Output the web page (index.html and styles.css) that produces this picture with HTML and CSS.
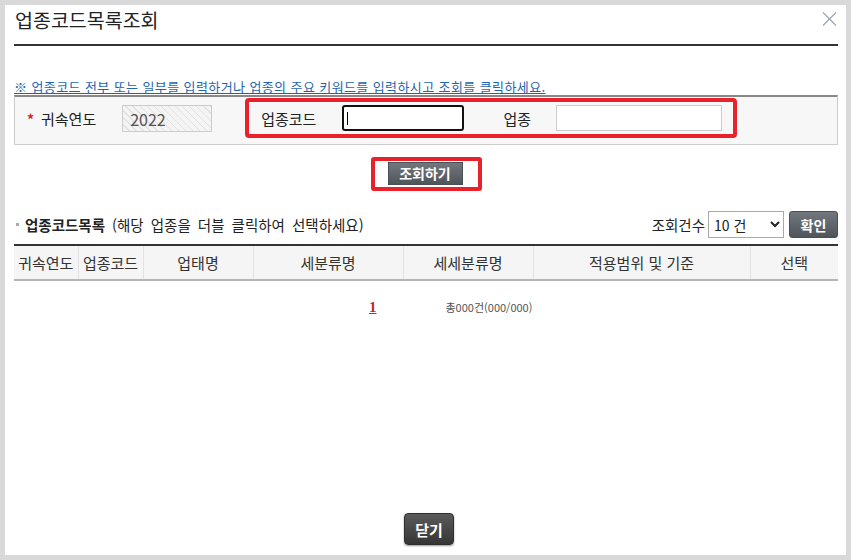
FILE: index.html
```html
<!DOCTYPE html>
<html lang="ko">
<head>
    <meta charset="UTF-8">
    <meta name="viewport" content="width=device-width, initial-scale=1.0">
    <title>업종코드목록조회</title>
    <link rel="stylesheet" href="styles.css">
</head>
<body>
    <div class="popup">
        <div class="popup-head">
            <h1>업종코드목록조회</h1>
            <button type="button" class="btn-x" aria-label="닫기">
                <svg width="15" height="14" viewBox="0 0 15 14">
                    <path d="M1 0.5 L14 13.5 M14 0.5 L1 13.5" stroke="#9aa6b6" stroke-width="1.2" fill="none"/>
                </svg>
            </button>
        </div>

        <p class="guide">※ 업종코드 전부 또는 일부를 입력하거나 업종의 주요 키워드를 입력하시고 조회를 클릭하세요.</p>

        <div class="search-box">
            <span class="req">*</span>
            <label class="lbl lbl-year">귀속연도</label>
            <input type="text" class="inp-year" value="2022" readonly>

            <div class="mark mark-field">
                <label class="lbl lbl-code">업종코드</label>
                <span class="caret-wrap"><input type="text" class="inp-code"></span>
                <label class="lbl lbl-name">업종</label>
                <input type="text" class="inp-name">
            </div>
        </div>

        <div class="search-btn-wrap">
            <div class="mark mark-btn">
                <button type="button" class="btn-dark btn-search">조회하기</button>
            </div>
        </div>

        <div class="list-head">
            <div class="list-title"><strong>업종코드목록</strong>&nbsp;(해당 업종을 더블 클릭하여 선택하세요)</div>
            <div class="list-opt">
                <span>조회건수</span>
                <select class="sel-count">
                    <option>10 건</option>
                    <option>20 건</option>
                    <option>50 건</option>
                </select>
                <button type="button" class="btn-dark btn-ok">확인</button>
            </div>
        </div>

        <table class="list-table">
            <colgroup>
                <col style="width:64px">
                <col style="width:65px">
                <col style="width:110px">
                <col style="width:150px">
                <col style="width:130px">
                <col style="width:217px">
                <col style="width:88px">
            </colgroup>
            <thead>
                <tr>
                    <th>귀속연도</th>
                    <th>업종코드</th>
                    <th>업태명</th>
                    <th>세분류명</th>
                    <th>세세분류명</th>
                    <th>적용범위 및 기준</th>
                    <th>선택</th>
                </tr>
            </thead>
        </table>

        <div class="paging">
            <a href="#" class="page-num">1</a>
            <span class="total">총000건(000/000)</span>
        </div>

        <div class="popup-foot">
            <button type="button" class="btn-close">닫기</button>
        </div>
    </div>
</body>
</html>
```

FILE: styles.css
```css
* {
    box-sizing: border-box;
}

body {
    margin: 0;
    padding: 5px;
    background: #d9d9d9;
    font-family: "Noto Sans CJK KR", "Noto Sans", sans-serif;
    color: #333;
}

.popup {
    width: 841px;
    height: 550px;
    background: #fff;
    padding: 0 8px 10px 9px;
    display: flex;
    flex-direction: column;
}

/* 상단 타이틀 */
.popup-head {
    height: 41px;
    border-bottom: 2px solid #333;
    display: flex;
    justify-content: space-between;
    align-items: flex-start;
}

.popup-head h1 {
    margin: 0;
    padding-left: 1px;
    font-size: 19.5px;
    font-weight: normal;
    line-height: 30px;
    color: #222;
}

.btn-x {
    margin: 7px 1px 0 0;
    padding: 0;
    border: none;
    background: none;
    width: 15px;
    height: 14px;
    line-height: 0;
}

.guide {
    margin: 33px 0 0;
    font-size: 13px;
    letter-spacing: 0.4px;
    line-height: 16px;
    color: #1f64ad;
    text-decoration: underline;
    white-space: nowrap;
}

/* 검색 영역 */
.search-box {
    height: 50px;
    display: flex;
    align-items: flex-start;
    padding: 1px 0 0 12px;
    background: #f7f7f7;
    border: 1px solid #ccc;
    border-top: 2px solid #888;
}

.req {
    align-self: center;
    margin-top: -5px;
    color: #d2232a;
    font-size: 14px;
    font-weight: bold;
    width: 7px;
    margin-right: 7px;
}

.lbl {
    font-size: 15px;
    color: #222;
    white-space: nowrap;
}

.lbl-year {
    align-self: center;
    margin-top: -5px;
    margin-right: 26px;
}

.inp-year {
    align-self: center;
    margin-top: -5px;
    width: 90px;
    height: 27px;
    margin-right: 33px;
    padding: 0 7px;
    border: 1px solid #ccc;
    font-family: inherit;
    font-size: 16px;
    color: #555;
    background: repeating-linear-gradient(45deg, #f4f4f4 0 4px, #e2e2e2 4px 5px);
}

.mark {
    border: 4px solid #e8212b;
    border-radius: 4px;
}

.mark-field {
    height: 40px;
    display: flex;
    align-items: center;
    padding: 0 11px 0 12px;
}

.lbl-code {
    margin-right: 26px;
}

.lbl-name {
    margin-right: 25px;
}

.caret-wrap {
    position: relative;
    display: block;
    margin-right: 39px;
}

.caret-wrap::after {
    content: "";
    position: absolute;
    left: 5px;
    top: 7px;
    width: 1px;
    height: 13px;
    background: #000;
}

.inp-code {
    display: block;
    width: 122px;
    height: 26px;
    border: 2px solid #111;
    border-radius: 3px;
    background: #fff;
    outline: none;
}

.inp-name {
    width: 166px;
    height: 26px;
    border: 1px solid #ccc;
    background: #fff;
}

.search-btn-wrap {
    display: flex;
    justify-content: center;
    margin-top: 12px;
}

.mark-btn {
    padding: 1px 15px 2px 13px;
    border-radius: 3px;
}

.btn-dark {
    display: block;
    padding: 0;
    border: 1px solid #4a4e55;
    background: linear-gradient(#72777e, #50555c);
    color: #fff;
    font-family: inherit;
    font-size: 14px;
    font-weight: bold;
    cursor: pointer;
}

.btn-search {
    width: 75px;
    height: 23px;
    line-height: 19px;
}

/* 목록 */
.list-head {
    margin-top: 20px;
    height: 27px;
    display: flex;
    justify-content: space-between;
    align-items: center;
}

.list-title {
    display: flex;
    align-items: center;
    font-size: 14.5px;
    word-spacing: 3px;
    color: #222;
}

.list-title::before {
    content: "";
    width: 3px;
    height: 3px;
    margin: 0 6px 0 2px;
    background: #aaa;
}

.list-opt {
    display: flex;
    align-items: center;
    font-size: 14.5px;
    color: #222;
}

.sel-count {
    width: 76px;
    height: 27px;
    margin: 0 5px 0 3px;
    padding: 0 1px;
    border: 1px solid #a9a9a9;
    background: #fff;
    font-family: inherit;
    font-size: 14px;
    color: #222;
}

.btn-ok {
    width: 49px;
    height: 27px;
    border-radius: 3px;
    line-height: 24px;
}

.list-table {
    width: 100%;
    margin-top: 6px;
    border-collapse: collapse;
    table-layout: fixed;
    border-top: 2px solid #333;
}

.list-table th {
    height: 35px;
    padding: 0;
    background: #f5f5f5;
    border-bottom: 2px solid #b5b5b5;
    font-size: 15px;
    font-weight: normal;
    color: #333;
    white-space: nowrap;
}

.list-table th + th {
    border-left: 1px solid #e2e2e2;
}

.paging {
    margin-top: 17px;
    height: 18px;
    display: flex;
    align-items: center;
    padding-left: 355px;
}

.page-num {
    font-family: "Liberation Serif", serif;
    font-size: 15px;
    font-weight: bold;
    color: #c0282d;
    text-decoration: underline;
}

.total {
    margin-left: 69px;
    font-size: 11px;
    color: #555;
}

.popup-foot {
    margin-top: auto;
    display: flex;
    justify-content: center;
    padding-left: 6px;
}

.btn-close {
    width: 50px;
    height: 32px;
    padding: 0;
    border: 1px solid #2e2e2e;
    border-radius: 4px;
    background: linear-gradient(#5a5a5a, #363636);
    box-shadow: 0 1px 2px rgba(0, 0, 0, 0.4);
    color: #fff;
    font-family: inherit;
    font-size: 15px;
    font-weight: bold;
    cursor: pointer;
}
```
